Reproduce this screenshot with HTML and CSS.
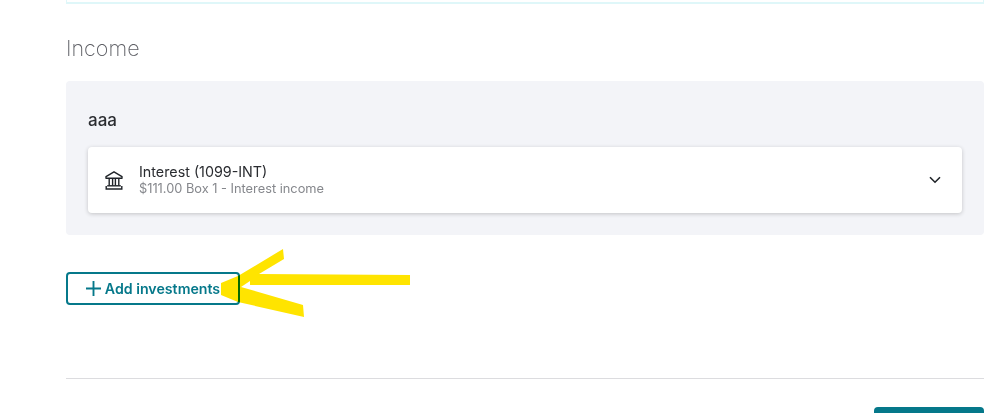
FILE: index.html
```html
<!DOCTYPE html>
<html lang="en">
<head>
<meta charset="UTF-8">
<title>Income</title>
<link rel="stylesheet" href="styles.css">
</head>
<body>
  <div class="main-container">
    <div class="banner"></div>
    <h2 class="heading">Income</h2>

    <div class="panel">
      <div class="payer">aaa</div>
      <div class="card">
        <svg class="bank-icon" viewBox="0 0 20 20" width="20" height="20" fill="none" stroke="#1f2328" stroke-width="1.4">
          <path d="M2 6.6 10 1.8l8 4.8v1.6H2z" stroke-linejoin="round"/>
          <path d="M5.2 8.2v7.4M8.6 8.2v7.4M11.4 8.2v7.4M14.8 8.2v7.4"/>
          <path d="M3.2 15.8h13.6" stroke-width="1.4"/>
          <path d="M2.2 16v3h15.6v-3" stroke-width="1.4"/>
        </svg>
        <div class="card-text">
          <div class="card-title">Interest (1099-INT)</div>
          <div class="card-sub">$111.00 Box 1 - Interest income</div>
        </div>
        <svg class="chevron" viewBox="0 0 12 8" width="12" height="8" fill="none" stroke="#1f2328" stroke-width="1.6">
          <path d="M1 1.2 6 6.2l5-5"/>
        </svg>
      </div>
    </div>

    <button class="add-btn">
      <svg viewBox="0 0 16 16" width="15" height="15" fill="none" stroke="#05788a" stroke-width="2">
        <path d="M8 0v16M0 8h16"/>
      </svg>
      Add investments
    </button>

    <hr class="divider">
    <div class="footer">
      <button class="next-btn"></button>
    </div>
  </div>

  <!-- yellow arrow someone drew over the screenshot -->
  <svg class="scribble" viewBox="0 0 999 413" width="999" height="413">
    <path d="M221 283 238 276 283 249 284 259 259 274 410 275 410 285 250 285 250 281 241 287 303 305 304 317 238 302 221 295z" fill="#ffe400"/>
  </svg>
</body>
</html>
```

FILE: styles.css
```css
body {
  margin: 0;
  background-color: #fff;
  font-family: Inter, "Liberation Sans", sans-serif;
  overflow: hidden;
}
.main-container {
  width: 918px;
  height: 413px;
  margin-left: 66px;
  overflow: hidden;
}
.banner {
  height: 2px;
  background-color: #fff;
  border: 1px solid #dff7f9;
  border-top: none;
  border-bottom-width: 2px;
}
.heading {
  margin: 32px 0 0;
  height: 24px;
  line-height: 24px;
  font-size: 21.5px;
  font-weight: 200;
  color: #5f6066;
}
.panel {
  margin-top: 21px;
  height: 154px;
  box-sizing: border-box;
  padding: 28px 22px 0;
  background-color: #f3f4f8;
  border-radius: 4px;
}
.payer {
  height: 22px;
  line-height: 22px;
  font-size: 17px;
  font-weight: 500;
  color: #2a2c30;
}
.card {
  margin-top: 16px;
  height: 66px;
  display: flex;
  align-items: center;
  padding: 0 21px 0 16px;
  background-color: #fff;
  border-radius: 4px;
  box-shadow: 0 1px 4px rgba(0, 0, 0, 0.2);
}
.bank-icon {
  flex: none;
}
.card-text {
  flex: 1;
  margin-left: 15px;
}
.card-title {
  font-size: 14.3px;
  line-height: 18px;
  color: #2a2c30;
}
.card-sub {
  font-size: 12.8px;
  line-height: 16px;
  color: #85878c;
}
.add-btn {
  display: flex;
  align-items: center;
  justify-content: center;
  gap: 4px;
  margin-top: 37px;
  width: 174px;
  height: 33px;
  padding: 0;
  background-color: #fff;
  border: 2px solid #05788a;
  border-radius: 4px;
  color: #05788a;
  font-family: inherit;
  font-size: 14.2px;
  font-weight: 600;
}
.divider {
  margin: 73px 0 0;
  border: none;
  border-top: 1px solid #dcdcdf;
}
.footer {
  display: flex;
  justify-content: flex-end;
  margin-top: 28px;
}
.next-btn {
  width: 110px;
  height: 40px;
  border: none;
  border-radius: 4px;
  background-color: #05788a;
}
.scribble {
  position: absolute;
  top: 0;
  left: 0;
  mix-blend-mode: multiply;
}
```
